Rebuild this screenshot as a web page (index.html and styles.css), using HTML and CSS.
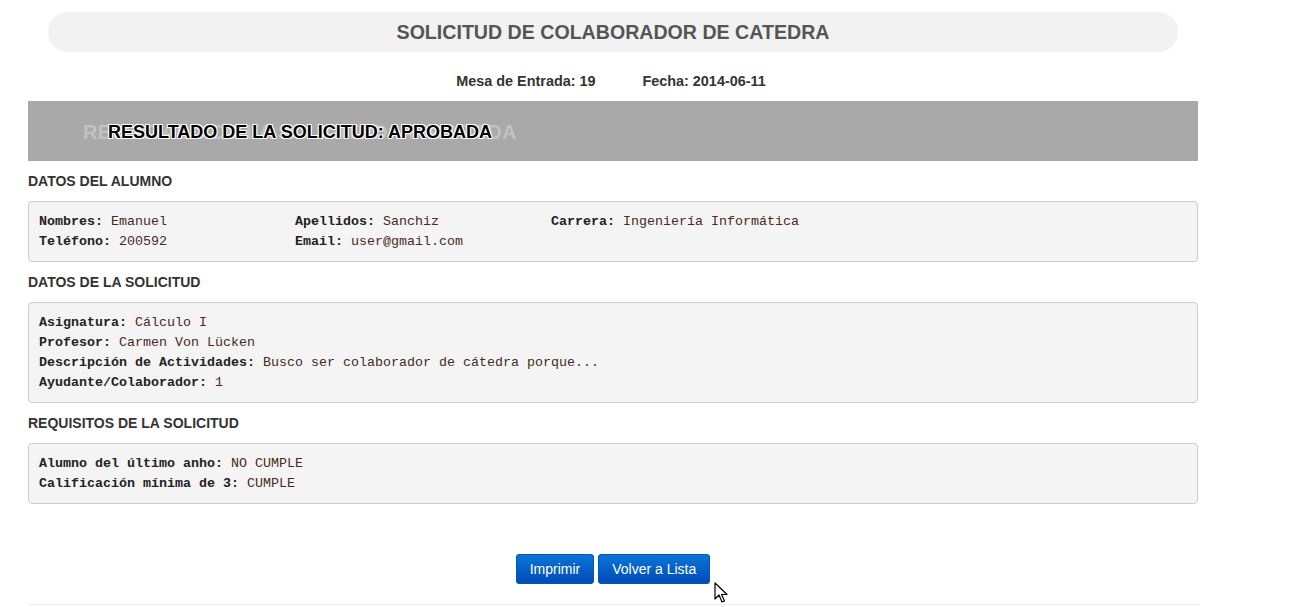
FILE: index.html
```html
<!DOCTYPE html>
<html lang="es">
<head>
<meta charset="utf-8">
<title>Solicitud de Colaborador de Catedra</title>
<link rel="stylesheet" href="styles.css">
</head>
<body>
<div class="page">
  <div class="title-wrap"><h1 class="title">SOLICITUD DE COLABORADOR DE CATEDRA</h1></div>
  <div class="meta">
    <span>Mesa de Entrada: 19</span>
    <span>Fecha: 2014-06-11</span>
  </div>
  <div class="banner">
    <span class="ghost">RESULTADO DE LA SOLICITUD: APROBADA</span>
    <span class="result">RESULTADO DE LA SOLICITUD: APROBADA</span>
  </div>

  <h2 class="section">DATOS DEL ALUMNO</h2>
  <div class="box cols">
    <div><b>Nombres:</b> <span class="v">Emanuel</span></div>
    <div><b>Apellidos:</b> <span class="v">Sanchiz</span></div>
    <div><b>Carrera:</b> <span class="v">Ingeniería Informática</span></div>
    <div><b>Teléfono:</b> <span class="v">200592</span></div>
    <div><b>Email:</b> <span class="v">user@gmail.com</span></div>
  </div>

  <h2 class="section">DATOS DE LA SOLICITUD</h2>
  <div class="box">
    <div><b>Asignatura:</b> <span class="v">Cálculo I</span></div>
    <div><b>Profesor:</b> <span class="v">Carmen Von Lücken</span></div>
    <div><b>Descripción de Actividades:</b> <span class="v">Busco ser colaborador de cátedra porque...</span></div>
    <div><b>Ayudante/Colaborador:</b> <span class="v">1</span></div>
  </div>

  <h2 class="section">REQUISITOS DE LA SOLICITUD</h2>
  <div class="box">
    <div><b>Alumno del último anho:</b> <span class="v">NO CUMPLE</span></div>
    <div><b>Calificación mínima de 3:</b> <span class="v">CUMPLE</span></div>
  </div>

  <div class="actions">
    <button class="btn" type="button">Imprimir</button>
    <button class="btn" type="button">Volver a Lista</button>
    <svg class="cursor" width="14" height="22" viewBox="0 0 14 22"><path d="M1 1 L1 17 L5 13 L8 20 L10.5 19 L7.5 12.5 L13 12.5 Z" fill="#fff" stroke="#000" stroke-width="1.2" stroke-linejoin="round"/></svg>
  </div>
  <div class="rule"></div>
</div>
</body>
</html>
```

FILE: styles.css
```css
html, body {
  margin: 0;
  padding: 0;
  background: #fff;
}

body {
  font-family: "Liberation Sans", Arial, sans-serif;
  font-size: 14px;
  line-height: 20px;
  color: #333;
}

.page {
  width: 1170px;
  margin-left: 28px;
  padding-top: 12px;
}

.title-wrap {
  margin: 0 20px;
  height: 40px;
  background: #f2f2f2;
  border-radius: 20px;
  display: flex;
  align-items: center;
  justify-content: center;
}

.title {
  margin: 0;
  font-size: 19.6px;
  line-height: 24px;
  font-weight: bold;
  color: #555;
}

.meta {
  display: flex;
  justify-content: center;
  gap: 47px;
  margin: 19px 0 10px;
  font-weight: bold;
  font-size: 14.4px;
  line-height: 20px;
  padding-right: 4px;
}

.banner {
  position: relative;
  height: 60px;
  background: #a9a9a9;
  display: flex;
  align-items: center;
  padding-left: 80px;
  margin-bottom: 10px;
}

.ghost {
  position: absolute;
  left: 55px;
  top: 20px;
  font-size: 20px;
  line-height: 22px;
  font-weight: bold;
  letter-spacing: 0.2px;
  color: #c2c2c2;
}

.result {
  position: relative;
  font-size: 18px;
  line-height: 22px;
  font-weight: bold;
  color: #000;
  padding-top: 1px;
  text-shadow: 1px 1px 0 #fff, -1px -1px 0 #fff, 1px -1px 0 #fff, -1px 1px 0 #fff;
}

.section {
  margin: 0 0 10px;
  font-size: 14px;
  line-height: 20px;
  font-weight: bold;
  color: #333;
}

.box {
  margin: 0 0 10px;
  padding: 9.5px 10px;
  background: #f4f4f4;
  border: 1px solid #ccc;
  border-radius: 4px;
  font-family: "Liberation Mono", "Courier New", monospace;
  font-size: 13.33px;
  line-height: 20px;
  color: #333;
}

.box b {
  color: #222;
}

.box .v {
  color: #4a2a20;
}

.cols {
  display: grid;
  grid-template-columns: 256px 256px 1fr;
}

.actions {
  position: relative;
  display: flex;
  justify-content: center;
  gap: 4px;
  margin-top: 50px;
}

.btn {
  font-family: "Liberation Sans", Arial, sans-serif;
  font-size: 14px;
  line-height: 20px;
  color: #fff;
  padding: 5px 14px;
  border: 0;
  border-radius: 4px;
  background: linear-gradient(#0a76d8, #0049b6);
  box-shadow: inset 0 0 0 1px #0456b8;
}

.cursor {
  position: absolute;
  left: 686px;
  top: 28px;
}

.rule {
  margin-top: 20px;
  border-top: 1px solid #eee;
}
```
